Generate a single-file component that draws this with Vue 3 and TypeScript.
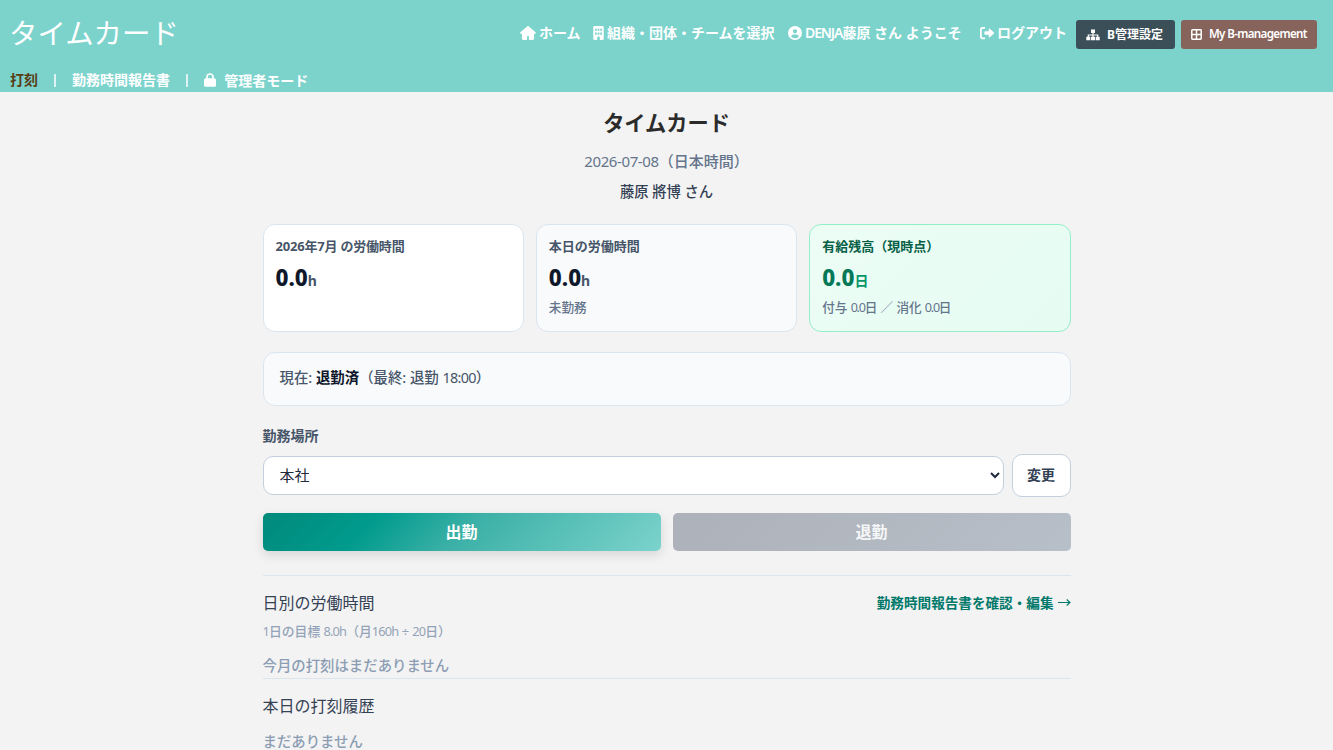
<script setup lang="ts">
import { ref } from 'vue'

interface Card {
  kind: string
  label: string
  value: string
  unit: string
}

const place = ref('本社')
const cards: Card[] = [
  { kind: 'month', label: '2026年7月 の労働時間', value: '0.0', unit: 'h' },
  { kind: 'today', label: '本日の労働時間', value: '0.0', unit: 'h' },
  { kind: 'leave', label: '有給残高（現時点）', value: '0.0', unit: '日' },
]
</script>

<template>
  <div class="page">
    <header class="header">
      <div class="top">
        <div class="brand">タイムカード</div>
        <nav class="links">
          <a class="home"><svg width="16" height="14" viewBox="0 0 576 512"><path fill="currentColor" d="M575.800 255.500c0 18-15 32.100-32 32.100h-32l.7 160.200c0 35-28 64.200-64 64.200H352c-18 0-32-14-32-32V384c0-18-14-32-32-32s-32 14-32 32v96c0 18-14 32-32 32H128c-36 0-64-29-64-64V287.600H32c-18 0-32-14-32-32.100 0-9 3-17 10-24L266.400 8c7-7 15-8 22-8s15 2 21 7l255.400 224.500c8 7 12 15 11 24z" /></svg>ホーム</a>
          <a class="org"><svg width="11" height="14" viewBox="0 0 384 512"><path fill="currentColor" fill-rule="evenodd" d="M48 0h288a48 48 0 0 1 48 48v416a48 48 0 0 1-48 48h-96v-80a48 48 0 0 0-96 0v80H48a48 48 0 0 1-48-48V48A48 48 0 0 1 48 0zm16 96v80h64V96zm96 0v80h64V96zm96 0v80h64V96zM64 240v80h64v-80zm96 0v80h64v-80zm96 0v80h64v-80z" /></svg>組織・団体・チームを選択</a>
          <a class="user"><svg width="14" height="14" viewBox="0 0 512 512"><path fill="currentColor" fill-rule="evenodd" d="M256 0a256 256 0 1 0 0 512 256 256 0 0 0 0-512zm0 120a76 76 0 1 1 0 152 76 76 0 0 1 0-152zM112 386c16-48 52-76 100-76h88c48 0 84 28 100 76a194 194 0 0 1-288 0z" /></svg><span><span class="denja">DENJA</span>藤原 さん ようこそ</span></a>
          <a class="logout"><svg width="14" height="14" viewBox="0 0 512 512"><path fill="none" stroke="currentColor" stroke-width="64" stroke-linecap="round" d="M160 64H96a64 64 0 0 0-64 64v256a64 64 0 0 0 64 64h64" /><path fill="currentColor" d="M502 233 358 98c-16-15-38-3-38 17v77H192c-18 0-32 14-32 32v64c0 18 14 32 32 32h128v77c0 20 22 32 38 17l144-135c13-13 13-33 0-46z" /></svg>ログアウト</a>
        </nav>
        <div class="actions">
          <a class="chip dark"><svg width="14" height="12" viewBox="0 0 14 12"><path fill="none" stroke="currentColor" stroke-width="1.2" d="M7 3v5M2.300 8.500V6h9.400v2.500" /><path fill="currentColor" d="M5 .5h4v3.600H5zM.3 7.700h4v3.600h-4zM5 7.700h4v3.600H5zM9.700 7.700h4v3.600h-4z" /></svg><span>B管理設定</span></a>
          <a class="chip brown"><svg width="11" height="11" viewBox="0 0 11 11"><path fill="none" stroke="currentColor" stroke-width="1.500" d="M1.500.8h8q.7 0 .7.7v8q0 .7-.7.7h-8q-.7 0-.7-.7v-8q0-.7.7-.7zM5.500.8v9.400M.8 5.500h9.400" /></svg><span class="myb">My B-management</span></a>
        </div>
      </div>
      <nav class="tabs">
        <a class="active">打刻</a>
        <i class="sep"></i>
        <a>勤務時間報告書</a>
        <i class="sep"></i>
        <a class="admin"><svg width="12" height="14" viewBox="0 0 448 512"><path fill="currentColor" fill-rule="evenodd" d="M80 192v-48a144 144 0 0 1 288 0v48h16a64 64 0 0 1 64 64v192a64 64 0 0 1-64 64H64a64 64 0 0 1-64-64V256a64 64 0 0 1 64-64zm64 0h160v-48a80 80 0 0 0-160 0z" /></svg>管理者モード</a>
      </nav>
    </header>

    <main class="main">
      <h1>タイムカード</h1>
      <p class="date"><span class="num">2026-07-08</span>（日本時間）</p>
      <p class="name">藤原 將博 さん</p>

      <section class="cards">
        <article v-for="card in cards" :key="card.kind" class="card" :class="card.kind">
          <div class="label">{{ card.label }}</div>
          <div class="value">{{ card.value }}<small>{{ card.unit }}</small></div>
          <div v-if="card.kind === 'today'" class="note">未勤務</div>
          <div v-if="card.kind === 'leave'" class="note">付与 <span class="n">0.0</span>日 ／ 消化 <span class="n">0.0</span>日</div>
        </article>
      </section>

      <section class="status">現在: <strong>退勤済</strong>（最終: 退勤 <span class="n">18:00</span>）</section>

      <label class="place-label" for="place">勤務場所</label>
      <div class="place">
        <select id="place" v-model="place"><option>本社</option></select>
        <button class="change" type="button">変更</button>
      </div>

      <div class="punch">
        <button class="in" type="button">出勤</button>
        <button class="out" type="button" disabled>退勤</button>
      </div>

      <section class="daily">
        <div class="row">
          <h2>日別の労働時間</h2>
          <a class="report">勤務時間報告書を確認・編集 <svg width="13" height="9" viewBox="0 0 13 9"><path fill="none" stroke="currentColor" stroke-width="1.100" d="M0 4.500h12M8.700 1.500 12 4.500 8.700 7.500" /></svg></a>
        </div>
        <p class="goal"><span class="n">1</span>日の目標 <span class="n">8.0h</span>（月<span class="n">160h</span> ÷ <span class="n">20</span>日）</p>
        <p class="empty">今月の打刻はまだありません</p>
      </section>
      <section class="history">
        <h2>本日の打刻履歴</h2>
        <p class="empty">まだありません</p>
      </section>
    </main>
  </div>
</template>

<style>
html, body { margin: 0; overflow: hidden; background: #f3f3f3; }
</style>

<style scoped>
* { box-sizing: border-box; }
.page { height: 750px; overflow: hidden; background: #f3f3f3; color: #334155; font-family: "Noto Sans", "Noto Sans CJK JP", sans-serif; }
h1, h2, p { margin: 0; }
svg { display: block; flex: none; }
.header { height: 92px; background: #7bd3cc; color: #fff; }
.top { display: flex; height: 68px; padding-right: 16px; }
.brand { padding-left: 9px; font-size: 28.400px; font-weight: 400; line-height: 67px; white-space: nowrap; }
.links { display: flex; margin-left: auto; font-size: 14px; font-weight: 700; line-height: 64px; white-space: nowrap; }
.links a { display: flex; align-items: center; height: 65px; }
.home { width: 73px; gap: 3px; }
.org { width: 195px; gap: 3px; }
.user { width: 192px; gap: 3px; }
.logout { width: 96px; gap: 3px; }
.denja { font-weight: 600; letter-spacing: -1.100px; }
.actions { display: flex; gap: 6px; padding-top: 20px; }
.chip { display: flex; align-items: center; height: 29px; padding-left: 10px; border-radius: 3px; font-size: 12px; font-weight: 700; line-height: 28px; white-space: nowrap; }
.dark { width: 99px; gap: 7px; background: #3b4f58; }
.brown { width: 136px; gap: 7px; background: #86635b; }
.myb { padding-bottom: 1px; font-size: 11.600px; font-weight: 600; letter-spacing: -0.650px; }
.tabs { display: flex; align-items: center; height: 24px; padding-left: 10px; font-size: 14px; font-weight: 700; line-height: 23px; }
.tabs a { height: 24px; }
.tabs .active { color: #593d15; }
.sep { width: 1.500px; height: 13px; margin: 0 16.300px; background: rgba(255, 255, 255, 0.75); }
.admin { display: flex; align-items: center; gap: 8px; }

.main { width: 808px; margin-left: 262.500px; }
h1 { padding-top: 14px; color: #2b2b2b; font-size: 21.200px; font-weight: 700; line-height: 34px; text-align: center; }
.date { margin-top: 9px; color: #64748b; font-size: 15px; font-weight: 500; line-height: 25px; text-align: center; }
.date .num { font-weight: 400; letter-spacing: -0.400px; }
.name { margin-top: 6px; color: #334155; font-size: 14.300px; font-weight: 500; line-height: 23px; text-align: center; }
.cards { display: grid; grid-template-columns: repeat(3, 1fr); gap: 12px; margin-top: 21px; }
.card { height: 108px; padding: 11px 12px; border: 1px solid #dbe5ee; border-radius: 12px; background: #fff; white-space: nowrap; }
.today { background: #f8fafc; }
.leave { border-color: #93efc8; background: linear-gradient(135deg, #ecfdf5, #e6fcf3); }
.label { color: #475569; font-size: 13px; font-weight: 700; line-height: 20px; }
.month .label { letter-spacing: -0.200px; }
.value { margin-top: 4px; color: #0f172a; font-size: 22.400px; font-weight: 800; line-height: 36px; }
.value small { color: #475569; font-size: 14px; font-weight: 700; }
.leave .label { color: #065f46; }
.leave .value { color: #047857; }
.leave .value small { color: #059669; }
.note { margin-top: -1px; color: #64748b; font-size: 12.600px; font-weight: 500; line-height: 20px; }
.n { font-weight: 400; letter-spacing: -0.065em; }
.note .n { letter-spacing: -0.100em; }
.status { height: 54px; margin-top: 20px; padding-left: 16px; border: 1px solid #dbe5ee; border-radius: 12px; background: #f8fafc; color: #475569; font-size: 14.400px; font-weight: 500; line-height: 50px; }
.status strong { color: #0f172a; font-weight: 700; }
.status .n { letter-spacing: -0.050em; }
.place-label { display: block; margin-top: 18px; color: #475569; font-size: 14px; font-weight: 700; line-height: 24px; }
.place { display: flex; align-items: center; gap: 8px; margin-top: 6px; }
select, button { font-family: inherit; }
select { width: 741px; height: 39px; padding: 0 12px 2px; border: 1px solid #c3d0de; border-radius: 10px; background-color: #fff; color: #1e293b; font-size: 15px; font-weight: 400; }
.change { width: 59px; height: 43px; padding: 0 0 3px; border: 1px solid #c3d0de; border-radius: 10px; background: #fff; color: #334155; font-size: 14px; font-weight: 700; }
.punch { display: grid; grid-template-columns: 1fr 1fr; gap: 12px; margin-top: 16px; }
.punch button { height: 38px; padding: 0 0 2px; border: 0; border-radius: 5px; color: #fff; font-size: 16px; font-weight: 700; }
.in { background: linear-gradient(135deg, #00897b 0%, #009b8d 27%, #3bb0a6 50%, #7bd3cc 100%); box-shadow: 0 4px 12px rgba(0, 0, 0, 0.12); }
.punch .out { background: linear-gradient(135deg, #adb1b9, #b7bfc8); color: #f5f6f7; }
.daily { height: 103px; margin-top: 24px; padding-top: 14px; border-top: 1px solid #dbe5ee; }
.row { display: flex; justify-content: space-between; align-items: center; height: 26px; }
h2 { color: #334155; font-size: 16px; font-weight: 400; line-height: 26px; }
.report { display: flex; align-items: center; gap: 4px; height: 24px; margin-bottom: 2px; color: #00796b; font-size: 13.600px; font-weight: 700; white-space: nowrap; }
.goal { margin-top: 5px; color: #94a3b8; font-size: 12.800px; font-weight: 500; line-height: 20px; }
.empty { margin-top: 13px; color: #8c9db3; font-size: 14.400px; font-weight: 500; line-height: 24px; }
.history { padding-top: 14px; border-top: 1px solid #dbe5ee; }
.history .empty { margin-top: 11px; }
</style>
